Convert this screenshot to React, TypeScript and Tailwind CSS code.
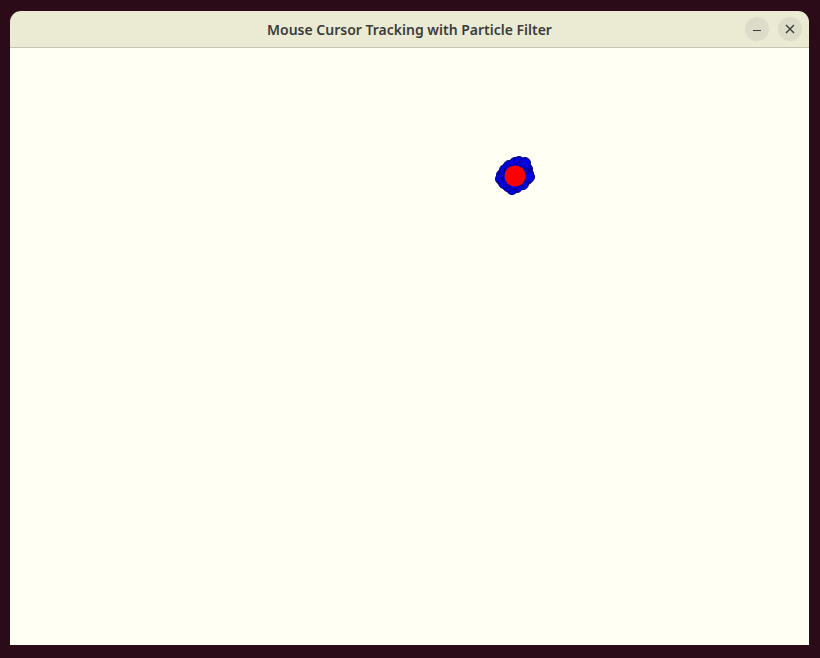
import React from "react";

// particle offsets around the estimate
const particles: [number, number][] = [
    [-12, -1], [-13, 3], [-9, -6], [-5, -10], [1, -13], [5, -14], [9, -11],
    [13, -7], [14, -2], [13, 3], [9, 8], [3, 11], [-2, 13], [-6, 10],
    [-10, 7], [-4, -5], [5, 4], [0, 8], [6, -4], [-6, 4], [15, 1], [11, -13],
];

const cx = 504;
const cy = 128;

export default function App() {
    return (
        <div className="w-[820px] h-[658px] bg-[#2b0b17] pl-[10px] pr-[11px] pt-[11px] pb-[13px]">
            <div className="w-full h-full flex flex-col rounded-t-[11px] overflow-hidden">
                <div className="relative h-[37px] shrink-0 bg-[#ebebd3] border-b border-[#c4c4b4] flex items-center justify-center">
                    <span
                        className="text-[14px] font-semibold text-[#3c3c3c]"
                        style={{ fontFamily: '"Noto Sans", sans-serif' }}
                    >
                        Mouse Cursor Tracking with Particle Filter
                    </span>
                    <div className="absolute right-[7px] top-[6px] flex gap-[9px]">
                        <div className="w-[24px] h-[24px] rounded-full bg-[#dcdcc8] flex items-center justify-center">
                            <div className="w-[8px] h-[1px] bg-[#3c3c3c] mt-[3px]" />
                        </div>
                        <div className="w-[24px] h-[24px] rounded-full bg-[#dcdcc8] flex items-center justify-center">
                            <svg width="10" height="10" viewBox="0 0 10 10">
                                <path d="M1 1 L9 9 M9 1 L1 9" stroke="#3c3c3c" strokeWidth="1.4" />
                            </svg>
                        </div>
                    </div>
                </div>
                <div className="flex-1 bg-[#fffff3]">
                    <svg width="799" height="597" className="block">
                        {particles.map(([dx, dy], i) => (
                            <circle
                                key={i}
                                cx={cx + dx}
                                cy={cy + dy}
                                r={5.5}
                                fill="#0000e0"
                                stroke="#00007a"
                                strokeWidth="1"
                            />
                        ))}
                        <circle cx={cx + 1} cy={cy} r={10.5} fill="#ff0000" />
                    </svg>
                </div>
            </div>
        </div>
    );
}
